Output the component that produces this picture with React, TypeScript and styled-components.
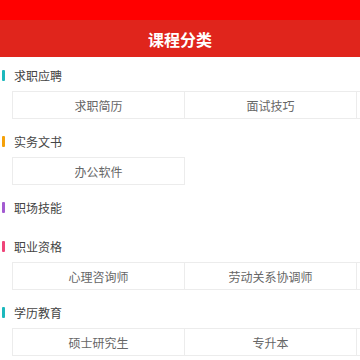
import React from 'react'
import styled, { createGlobalStyle } from 'styled-components'

const GlobalStyle = createGlobalStyle`
  html, body {
    margin: 0;
    padding: 0;
    background: #fff;
    font-family: "Noto Sans CJK SC", "Noto Sans", sans-serif;
  }
`

const Page = styled.div`
  width: 360px;
  height: 360px;
  overflow: hidden;
  background: #fff;
`

const StatusBar = styled.div`
  height: 20px;
  background: #ff0000;
`

const TitleBar = styled.header`
  height: 37px;
  background: #e0251c;
  display: flex;
  align-items: center;
  justify-content: center;
  color: #fff;
  font-size: 16px;
  font-weight: 700;
`

const List = styled.div`
  padding-top: 8px;
`

const Section = styled.section`
  padding-bottom: 13px;
`

const SectionHead = styled.div`
  height: 20px;
  display: flex;
  align-items: center;
  font-size: 12px;
  color: #444;
`

const Mark = styled.span<{ $color: string }>`
  width: 3px;
  height: 11px;
  margin: 0 9px 0 2px;
  border-radius: 1px;
  background: ${({ $color }) => $color};
`

const Grid = styled.div`
  display: grid;
  grid-template-columns: repeat(3, 172px);
  margin: 6px 0 0 12px;
`

const Cell = styled.div`
  height: 26px;
  display: flex;
  align-items: center;
  justify-content: center;
  font-size: 12px;
  color: #666;
  border: 1px solid #ececec;
  margin-right: -1px;
  margin-bottom: -1px;
`

type Group = { title: string; color: string; items: string[] }

const groups: Group[] = [
  { title: '求职应聘', color: '#1cb8bd', items: ['求职简历', '面试技巧', ''] },
  { title: '实务文书', color: '#f5a10a', items: ['办公软件'] },
  { title: '职场技能', color: '#a35bd1', items: [] },
  { title: '职业资格', color: '#ef4479', items: ['心理咨询师', '劳动关系协调师', ''] },
  { title: '学历教育', color: '#1cb8bd', items: ['硕士研究生', '专升本', ''] },
]

export default function App() {
  return (
    <Page>
      <GlobalStyle />
      <StatusBar />
      <TitleBar>课程分类</TitleBar>
      <List>
        {groups.map((g) => (
          <Section key={g.title}>
            <SectionHead>
              <Mark $color={g.color} />
              {g.title}
            </SectionHead>
            <Grid>
              {g.items.map((it, i) => (
                <Cell key={i}>{it}</Cell>
              ))}
            </Grid>
          </Section>
        ))}
      </List>
    </Page>
  )
}
